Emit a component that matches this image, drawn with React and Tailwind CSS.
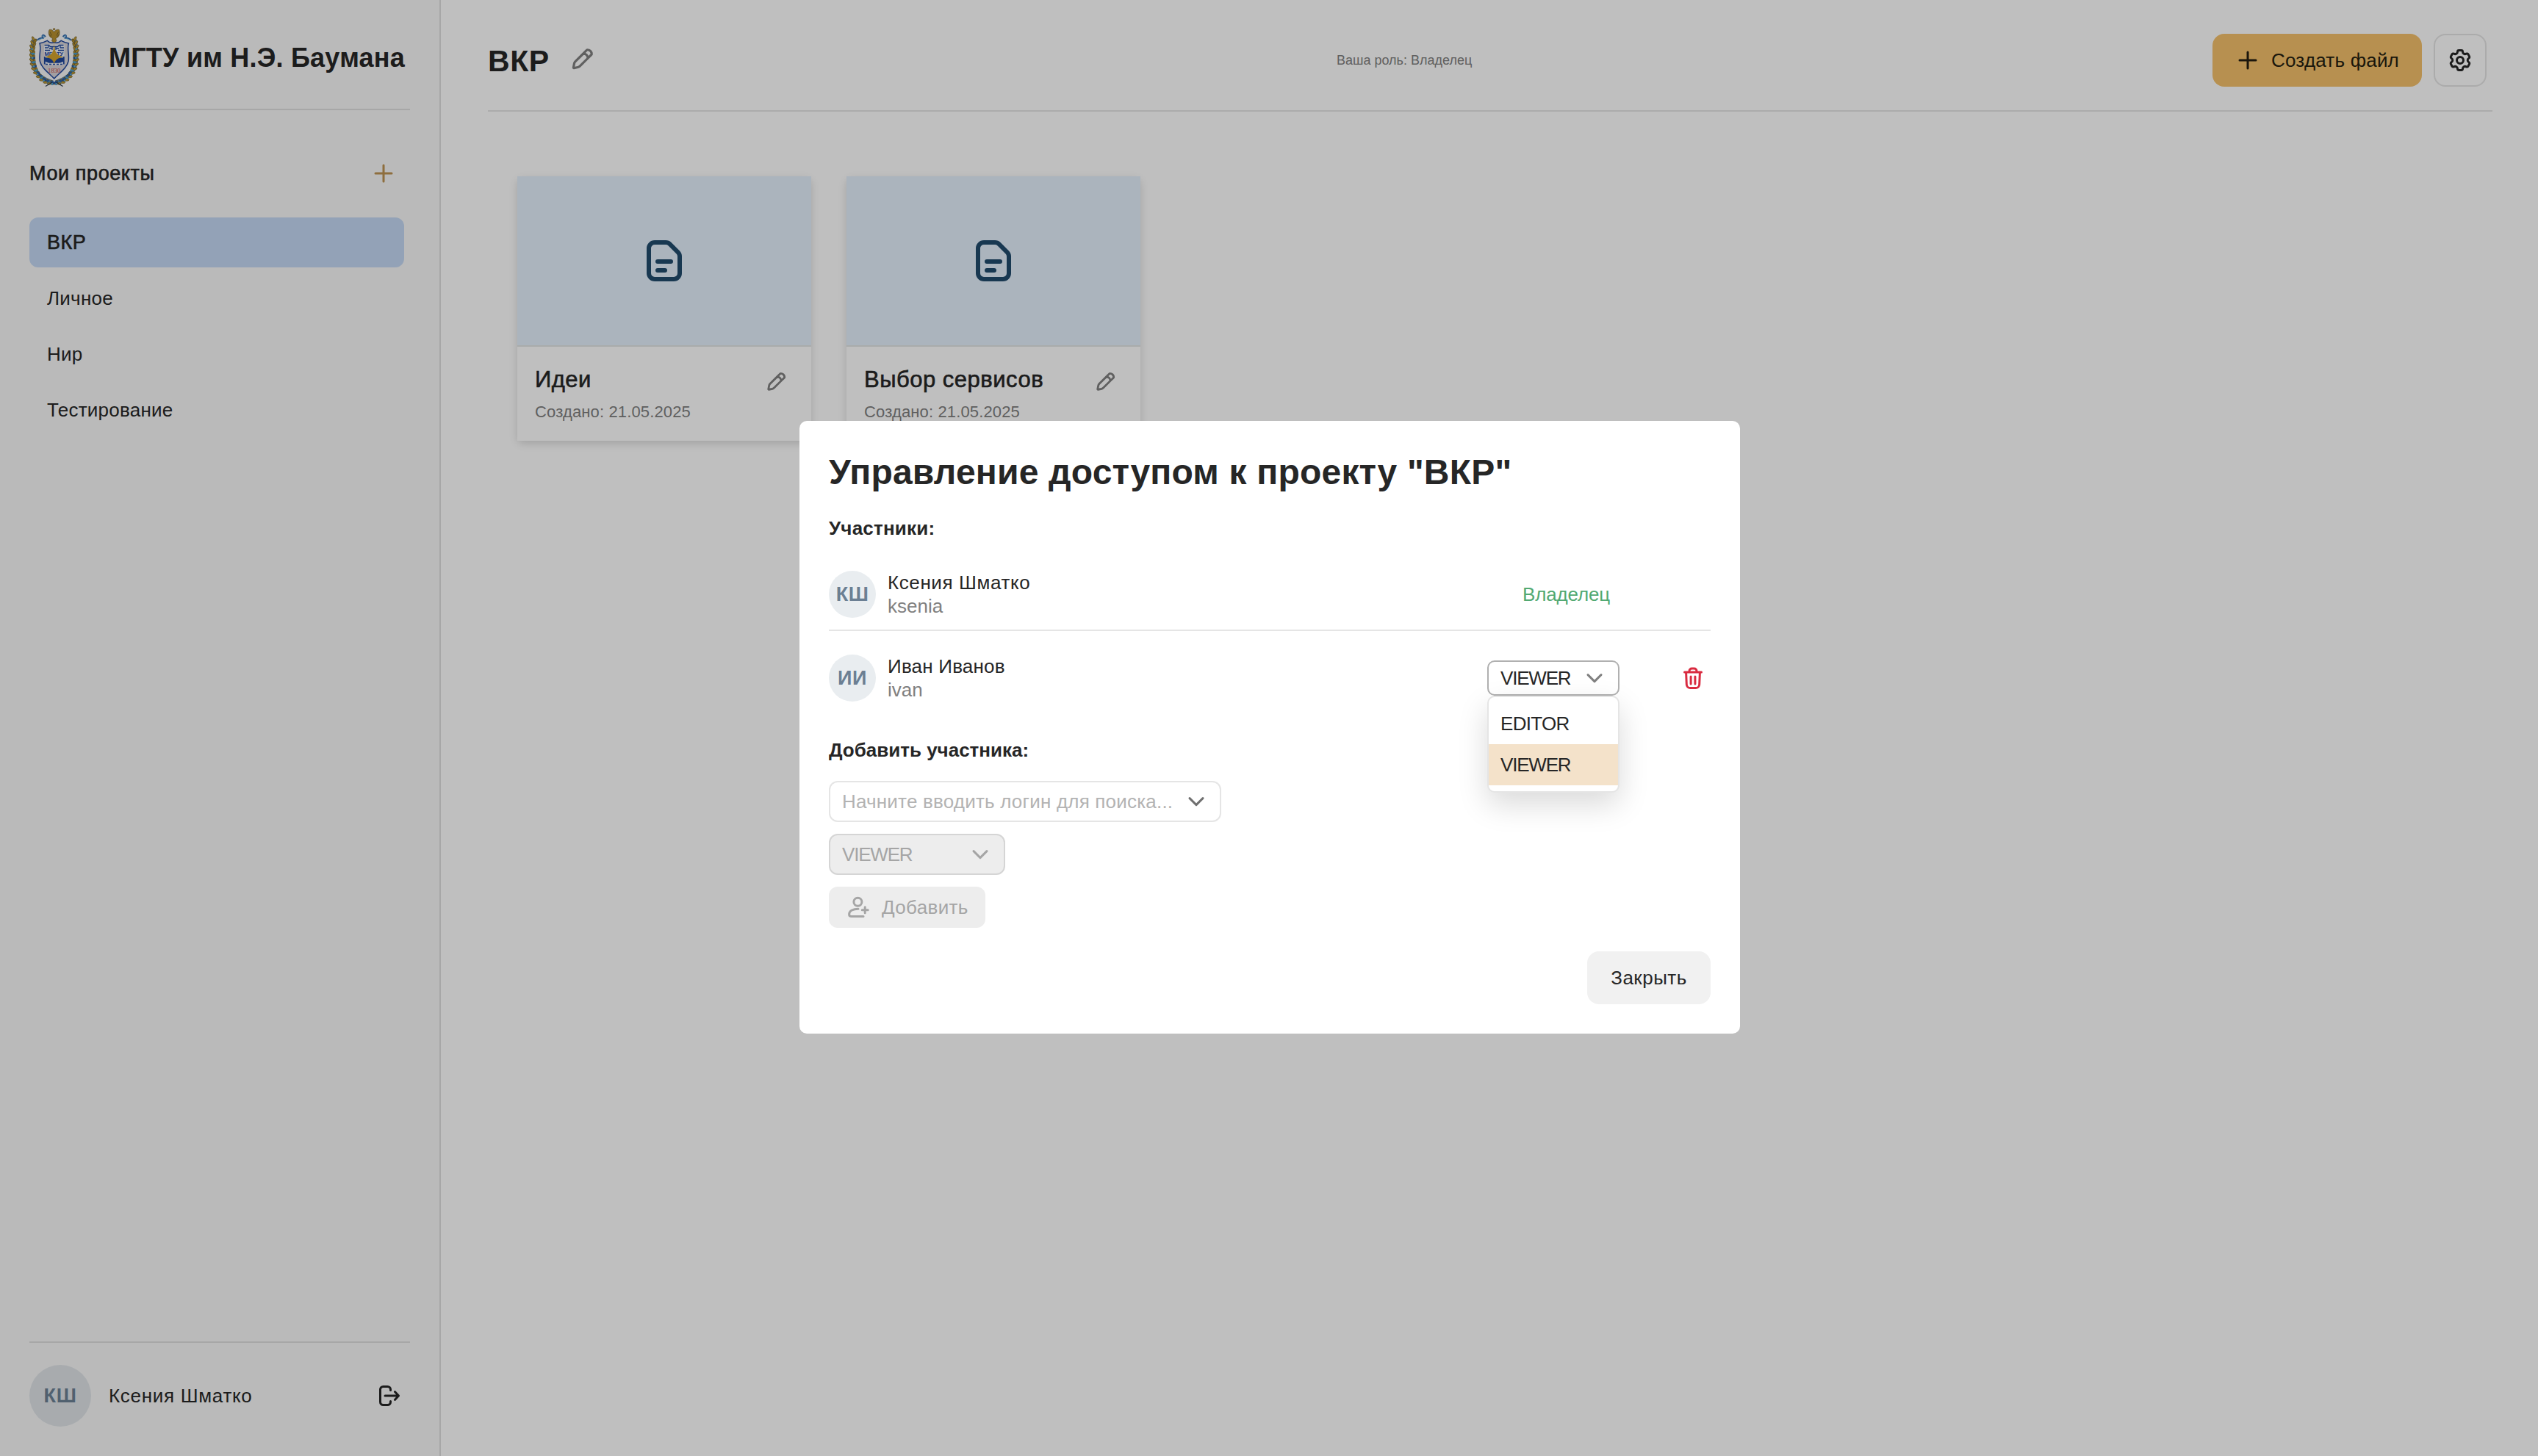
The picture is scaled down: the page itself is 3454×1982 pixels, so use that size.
import React from "react";

const projects = ["ВКР", "Личное", "Нир", "Тестирование"];

const LEFT_WREATH = [
  [5.5, 15], [4.2, 20.5], [3, 26], [2.8, 32], [2.8, 38], [3.2, 44], [4.2, 50], [6, 56], [8.8, 61.5], [12.6, 66.5], [17, 70.8], [22.4, 74], [28, 75.5],
];

function WreathHalf() {
  return (
    <g>
      <path d="M5.5 16C2.500 28 2.500 44 6 54c4 9 13 16 26 20" fill="none" stroke="#3b5a70" strokeWidth="5" opacity=".7" />
      {LEFT_WREATH.map(([x, y], i) => (
        <g key={i} transform={`translate(${x} ${y}) rotate(${-i * 6})`}>
          <ellipse cx="0" cy="0" rx="1.5" ry="3.6" transform="rotate(-28)" fill="#c39c34" stroke="#5d4f24" strokeWidth=".5" />
          <ellipse cx="3.4" cy="1.4" rx="1.5" ry="3.4" transform="rotate(30)" fill="#b38d2d" stroke="#47462f" strokeWidth=".5" />
          {i > 2 && <ellipse cx="2.6" cy="3" rx="2.8" ry="1.5" transform="rotate(24)" fill={i % 2 ? "#4a9fce" : "#2257a6"} />}
          {i > 7 && <ellipse cx="3" cy="-1" rx="2.400" ry="1.200" transform="rotate(50)" fill="#2a62ab" />}
          {i % 2 === 0 && i > 1 && <circle cx=".2" cy="3" r="1.3" fill="#5aaed6" />}
        </g>
      ))}
      <path d="M22 12c-2-3-4-3-4.5-1.500C17 12 18 13.500 20 14M19 14c-3-1-6 0-8.500 3" fill="none" stroke="#2f67ab" strokeWidth="1.7" />
      <path d="M21 13c-1-2-3-2.500-3.500-2M18 14.500c-2 0-4 1-5 2.500" fill="none" stroke="#58b0dc" strokeWidth="1" />
      <path d="M22 79.5 31 74" stroke="#2b3a4c" strokeWidth="1.2" />
    </g>
  );
}

function Crest() {
  return (
    <svg viewBox="0 0 68 80" className="h-20 w-[68px] shrink-0">
      <WreathHalf />
      <g transform="matrix(-1 0 0 1 67.5 0)">
        <WreathHalf />
      </g>
      <path d="M33.700 17.500c-4 2.500-8 0-9.500-2-3 1.500-8.500 3.500-12.700 4 3.500 9-1.500 16 .5 26 2.500 11 13 17 21.700 26.500 8.700-9.500 19.200-15.500 21.700-26.500 2-10-3-17 .5-26-4.200-.5-9.700-2.500-12.700-4-1.500 2-5.500 4.500-9.500 2z" fill="#f4f4f8" />
      <path d="M33.700 19.500c-4 1.500-7.500 0-9.500-2.200-3.200 1.700-6.700 3-10.200 3.700 2.500 8.500-1.300 15.500.3 24.200 2.400 9.800 11.400 15.300 19.400 23.800 8-8.500 17-14 19.400-23.800 1.600-8.700-2.200-15.700.3-24.200-3.500-.7-7-2-10.200-3.700-2 2.200-5.500 3.700-9.500 2.200z" fill="#d9d5d9" stroke="#1f479c" strokeWidth="1.500" />
      <rect x="20" y="22.500" width="27.500" height="28" fill="#eef0f6" />
      <g fill="none" stroke="#1f479c">
        <path d="M20.500 23.500h6l2 2h10l2-2h6M21 27h4m2 1h4m5 0h4m2-1h5M21 30.500h7m11 0h8M26 24.500v3m16-3v3M31 25v5m5-5v5" strokeWidth="1.3" />
        <path d="M20.800 39v10.500M46.800 39v10.500M21 43.500l6 3h13l6-3" strokeWidth="1.8" />
        <path d="M22 49.500h3m2 0h3m2 0h3m2 0h3m2 0h3" strokeWidth="1.6" />
      </g>
      <path d="M21 40.500h26v5l-5 2H26l-5-2z" fill="#1f479c" />
      <text x="20.5" y="38" fontFamily="Liberation Sans" fontWeight="700" fontSize="7.5" fill="#1f479c">МГ</text>
      <text x="37" y="38" fontFamily="Liberation Sans" fontWeight="700" fontSize="7.5" fill="#1f479c">ТУ</text>
      <path d="M33.700 21c.8 11 2 16.500 13 18.500-8 1-11.500 4-13 9.500-1.500-5.500-5-8.500-13-9.500 11-2 12.200-7.500 13-18.500z" fill="#d6a42c" />
      <text x="33.7" y="60.8" textAnchor="middle" fontFamily="Liberation Serif" fontSize="8.6" fill="#c84a44">1830</text>
      <g fill="#b8912f" stroke="#5f5126" strokeWidth=".5">
        <path d="M33.500 6c-1-3-4-4.500-6.500-3.500-1.500 3-1 8 2 10.500 1 .8 2 1 2.500 1l-1 4 3.200 2 3.200-2-1-4c.5 0 1.500-.2 2.500-1 3-2.500 3.500-7.500 2-10.500C38 1.500 34.500 3 33.500 6z" />
        <circle cx="33.6" cy="1.8" r="1.3" />
      </g>
      <path d="M28 5.500l2.500 5M26.800 8.500l2.700 3.500M39.500 5.500 37 10.500M40.600 8.500 38 12" stroke="#4f4725" strokeWidth=".6" />
    </svg>
  );
}

function Icon({ className, children }) {
  return (
    <svg viewBox="0 0 16 16" fill="none" stroke="currentColor" strokeWidth="1.5" strokeLinecap="round" strokeLinejoin="round" className={className}>
      {children}
    </svg>
  );
}

const PlusIcon = ({ className }) => (
  <Icon className={className}>
    <path d="M8 2.500v11M2.500 8h11" />
  </Icon>
);

const PencilIcon = ({ className }) => (
  <svg viewBox="0 0 16 16" fill="currentColor" fillRule="evenodd" className={className}>
    <path d="M11.423 1A3.577 3.577 0 0 1 15 4.577c0 .27-.108.53-.3.722l-.528.529-1.971 1.971-5.059 5.059a3 3 0 0 1-1.533.82l-2.638.528a1 1 0 0 1-1.177-1.177l.528-2.638a3 3 0 0 1 .82-1.533l5.059-5.059 2.500-2.500c.191-.191.451-.299.722-.299Zm-2.310 4.009-4.910 4.910a1.500 1.500 0 0 0-.410.766l-.380 1.903 1.902-.380a1.500 1.500 0 0 0 .767-.410l4.910-4.910a2.077 2.077 0 0 0-1.880-1.880Zm3.098.658a3.590 3.590 0 0 0-1.878-1.879l1.280-1.280c.995.090 1.788.884 1.878 1.880l-1.280 1.280Z" />
  </svg>
);

const GearIcon = ({ className }) => (
  <Icon className={className}>
    <path d="M7.2 1.250H8.800a.95.95 0 0 1 .95.95c0 1.231 1.332 2 2.398 1.384a.95.95 0 0 1 1.298.348l.8 1.386a.95.95 0 0 1-.348 1.298c-1.066.615-1.066 2.153 0 2.768a.95.95 0 0 1 .348 1.298l-.8 1.386a.95.95 0 0 1-1.298.348c-1.066-.616-2.398.153-2.398 1.384a.95.95 0 0 1-.95.95H7.200a.95.95 0 0 1-.95-.95c0-1.231-1.332-2-2.398-1.384a.95.95 0 0 1-1.298-.348l-.8-1.386a.95.95 0 0 1 .348-1.298c1.066-.615 1.066-2.153 0-2.768a.95.95 0 0 1-.348-1.298l.8-1.386a.95.95 0 0 1 1.298-.348c1.066.616 2.398-.153 2.398-1.384a.95.95 0 0 1 .95-.95z" />
    <circle cx="8" cy="8" r="2.25" />
  </Icon>
);

const LogoutIcon = ({ className }) => (
  <Icon className={className}>
    <path d="M8.750 4.250v-.5a2 2 0 0 0-2-2h-3a2 2 0 0 0-2 2v8.500a2 2 0 0 0 2 2h3a2 2 0 0 0 2-2v-.5M5 8h9.200M11.700 5.250 14.250 8 11.700 10.750" />
  </Icon>
);

const FileIcon = ({ className }) => (
  <Icon className={className}>
    <path d="M4.750 1.750h3.760a2 2 0 0 1 1.410.590l2.740 2.740a2 2 0 0 1 .590 1.410v5.760a2 2 0 0 1-2 2h-6.500a2 2 0 0 1-2-2v-8.500a2 2 0 0 1 2-2zM5.750 8.250h4.500M5.750 11.250h2.500" />
  </Icon>
);

const TrashIcon = ({ className }) => (
  <Icon className={className}>
    <path d="M2.250 4h11.500M5.500 3.750v-.5a1.700 1.700 0 0 1 1.700-1.700h1.600a1.700 1.700 0 0 1 1.700 1.700v.5M3.300 4.200l.35 8.150a2.500 2.500 0 0 0 2.500 2.400h3.700a2.500 2.500 0 0 0 2.500-2.400l.35-8.150M6.550 7v5M9.450 7v5" />
  </Icon>
);

const PersonPlusIcon = ({ className }) => (
  <Icon className={className}>
    <circle cx="7.7" cy="4.4" r="2.75" />
    <path d="M8 9.100c-3.300 0-6.200 1.200-6.200 3.600 0 1.150.7 1.550 1.700 1.550H11.500M12.600 7.900v4M10.600 9.900h4" />
  </Icon>
);

const ChevronIcon = ({ className }) => (
  <Icon className={className}>
    <path d="M3.500 5.800 8 10.300l4.500-4.500" />
  </Icon>
);

function Sidebar() {
  return (
    <aside className="flex w-[600px] shrink-0 flex-col border-r-2 border-[#dfdfdf] bg-[#f8f8f8] px-10 pt-[38px] pb-10">
      <div className="flex items-center gap-10 border-b-2 border-[#dfdfdf] pb-[30px]">
        <Crest />
        <span className="mt-px text-[36px] leading-[44px] font-bold tracking-[0.22px] whitespace-nowrap">МГТУ им Н.Э. Баумана</span>
      </div>
      <div className="mt-[66px] flex h-10 items-center justify-between pr-[20px]">
        <h2 className="text-[27px] leading-10 tracking-[0.6px] [-webkit-text-stroke:0.6px]">Мои проекты</h2>
        <PlusIcon className="size-8 text-[#be9353]" />
      </div>
      <nav className="mt-10 mr-2 flex flex-col gap-2">
        {projects.map((name, i) => (
          <a
            key={name}
            className={
              i === 0
                ? "flex h-[68px] items-center rounded-xl bg-[#c5d9f4] px-6 text-[27px] tracking-[0.5px] [-webkit-text-stroke:0.6px]"
                : "flex h-[68px] items-center rounded-xl px-6 text-[26px] tracking-[0.25px]"
            }
          >
            {name}
          </a>
        ))}
      </nav>
      <div className="mt-auto flex items-center border-t-2 border-[#dfdfdf] pt-[30px]">
        <span className="flex size-[84px] items-center justify-center rounded-full bg-[#e0e5e9] text-[27px] font-bold tracking-[0.8px] text-[#6b8095]">КШ</span>
        <span className="ml-6 text-[26px] tracking-[0.7px]">Ксения Шматко</span>
        <LogoutIcon className="mr-3 ml-auto size-8" />
      </div>
    </aside>
  );
}

function FileCard({ title, date }) {
  return (
    <article className="w-[400px] rounded-lg shadow-[0_4px_12px_rgba(0,0,0,0.15)]">
      <div className="flex h-[232px] items-center justify-center border-b-2 border-[#e2e4e5] bg-[#e4f1fd] text-[#214b6d]">
        <FileIcon className="size-16" />
      </div>
      <div className="h-32 bg-white pt-[25px] pr-[33px] pl-6">
        <div className="flex h-10 items-center justify-between">
          <h3 className="text-[31px] leading-10 tracking-[0.5px] [-webkit-text-stroke:0.6px]">{title}</h3>
          <PencilIcon className="mt-1.5 size-[30px] text-[#808080]" />
        </div>
        <p className="mt-[9px] text-[22px] leading-[30px] tracking-[0.14px] text-[#808080]">Создано: {date}</p>
      </div>
    </article>
  );
}

function MainArea() {
  return (
    <main className="flex-1 bg-white pr-[62px] pl-16">
      <header className="flex h-[152px] items-center border-b-2 border-[#e5e5e5] pt-[14px]">
        <div className="flex w-[1155px] items-center gap-[27px]">
          <h1 className="mt-0.5 text-[41px] leading-[48px] font-bold tracking-[0.6px]">ВКР</h1>
          <PencilIcon className="-mt-0.5 size-[34px] text-[#808080]" />
        </div>
        <span className="text-[18px] text-[#808080]">Ваша роль: Владелец</span>
        <div className="mr-2 ml-auto flex gap-4">
          <button className="flex h-[72px] w-[285px] items-center rounded-2xl bg-[#f5c16b] pl-8 text-[#241e10]">
            <PlusIcon className="size-8" />
            <span className="ml-4 text-[26px] tracking-[0.2px] whitespace-nowrap">Создать файл</span>
          </button>
          <button className="flex size-[72px] items-center justify-center rounded-2xl border-2 border-[#e5e5e5]">
            <GearIcon className="size-8" />
          </button>
        </div>
      </header>
      <section className="flex gap-12 pt-[88px] pl-10">
        <FileCard title="Идеи" date="21.05.2025" />
        <FileCard title="Выбор сервисов" date="21.05.2025" />
      </section>
    </main>
  );
}

function Member({ initials, name, login, divider, children }) {
  return (
    <li className={divider ? "flex items-center border-b-2 border-[#e5e5e5] py-4" : "flex items-center py-4"}>
      <span className="flex size-16 items-center justify-center rounded-full bg-[#e9edf0] text-[27px] font-bold tracking-[0.5px] text-[#6b7f93]">{initials}</span>
      <div className="ml-4 flex-1 text-[26px] leading-8">
        <div className={divider ? "tracking-[0.6px]" : "tracking-[0.2px]"}>{name}</div>
        <div className="text-[#808080]">{login}</div>
      </div>
      {children}
    </li>
  );
}

function AccessDialog() {
  return (
    <div role="dialog" className="mt-[-2px] flex w-[1280px] flex-col rounded-[10px] bg-white p-10 text-[26px] leading-8">
      <h2 className="text-[48px] leading-[59px] font-bold tracking-[0.19px]">Управление доступом к проекту "ВКР"</h2>
      <h3 className="mt-[31px] font-bold tracking-[0.2px]">Участники:</h3>
      <ul className="mt-[26px] flex flex-col gap-4">
        <Member initials="КШ" name="Ксения Шматко" login="ksenia" divider>
          <span className="w-64 tracking-[-0.15px] text-[#52a972]">Владелец</span>
        </Member>
        <Member initials="ИИ" name="Иван Иванов" login="ivan">
          <div className="relative h-12 w-[180px]">
            <div className="flex h-full items-center justify-between rounded-[10px] border-2 border-[#b0b0b0] px-4">
              <span className="tracking-[-1.2px]">VIEWER</span>
              <ChevronIcon className="size-8 text-[#808080]" />
            </div>
            <ul className="absolute top-full left-0 z-10 w-full rounded-[10px] border-2 border-[#e5e5e5] bg-white py-2 shadow-[0_16px_40px_rgba(0,0,0,0.15)]">
              <li className="flex h-14 items-center px-4 tracking-[-0.7px]">EDITOR</li>
              <li className="flex h-14 items-center bg-[#f4e2ca] px-4 tracking-[-1.2px]">VIEWER</li>
            </ul>
          </div>
          <TrashIcon className="mr-2 ml-[84px] size-8 text-[#d92b40]" />
        </Member>
      </ul>
      <h3 className="mt-[34px] font-bold">Добавить участника:</h3>
      <div className="mt-[26px] flex flex-col items-start gap-4">
        <div className="flex h-14 w-[534px] items-center justify-between rounded-xl border-2 border-[#e5e5e5] px-4">
          <span className="tracking-[0.2px] whitespace-nowrap text-[#b3b3b3]">Начните вводить логин для поиска...</span>
          <ChevronIcon className="size-8 text-[#707070]" />
        </div>
        <div className="flex h-14 w-60 items-center justify-between rounded-xl border-2 border-[#d5d5d5] bg-[#ededed] px-4 text-[#a5a5a5]">
          <span className="tracking-[-1.2px]">VIEWER</span>
          <ChevronIcon className="size-8" />
        </div>
        <button className="flex h-14 w-[213px] items-center rounded-xl bg-[#ededed] pl-6 text-[#a5a5a5]">
          <PersonPlusIcon className="size-8" />
          <span className="ml-4 tracking-[0.35px]">Добавить</span>
        </button>
      </div>
      <button className="mt-8 h-[72px] w-[168px] self-end rounded-2xl bg-[#f1f1f1] tracking-[0.5px]">Закрыть</button>
    </div>
  );
}

export default function App() {
  return (
    <div className="flex h-[1982px] w-[3454px] overflow-hidden font-['Liberation_Sans',Arial,sans-serif] text-[#262626]">
      <Sidebar />
      <MainArea />
      <div className="fixed inset-0 z-20 flex items-center justify-center bg-black/25 pl-0.5">
        <AccessDialog />
      </div>
    </div>
  );
}
